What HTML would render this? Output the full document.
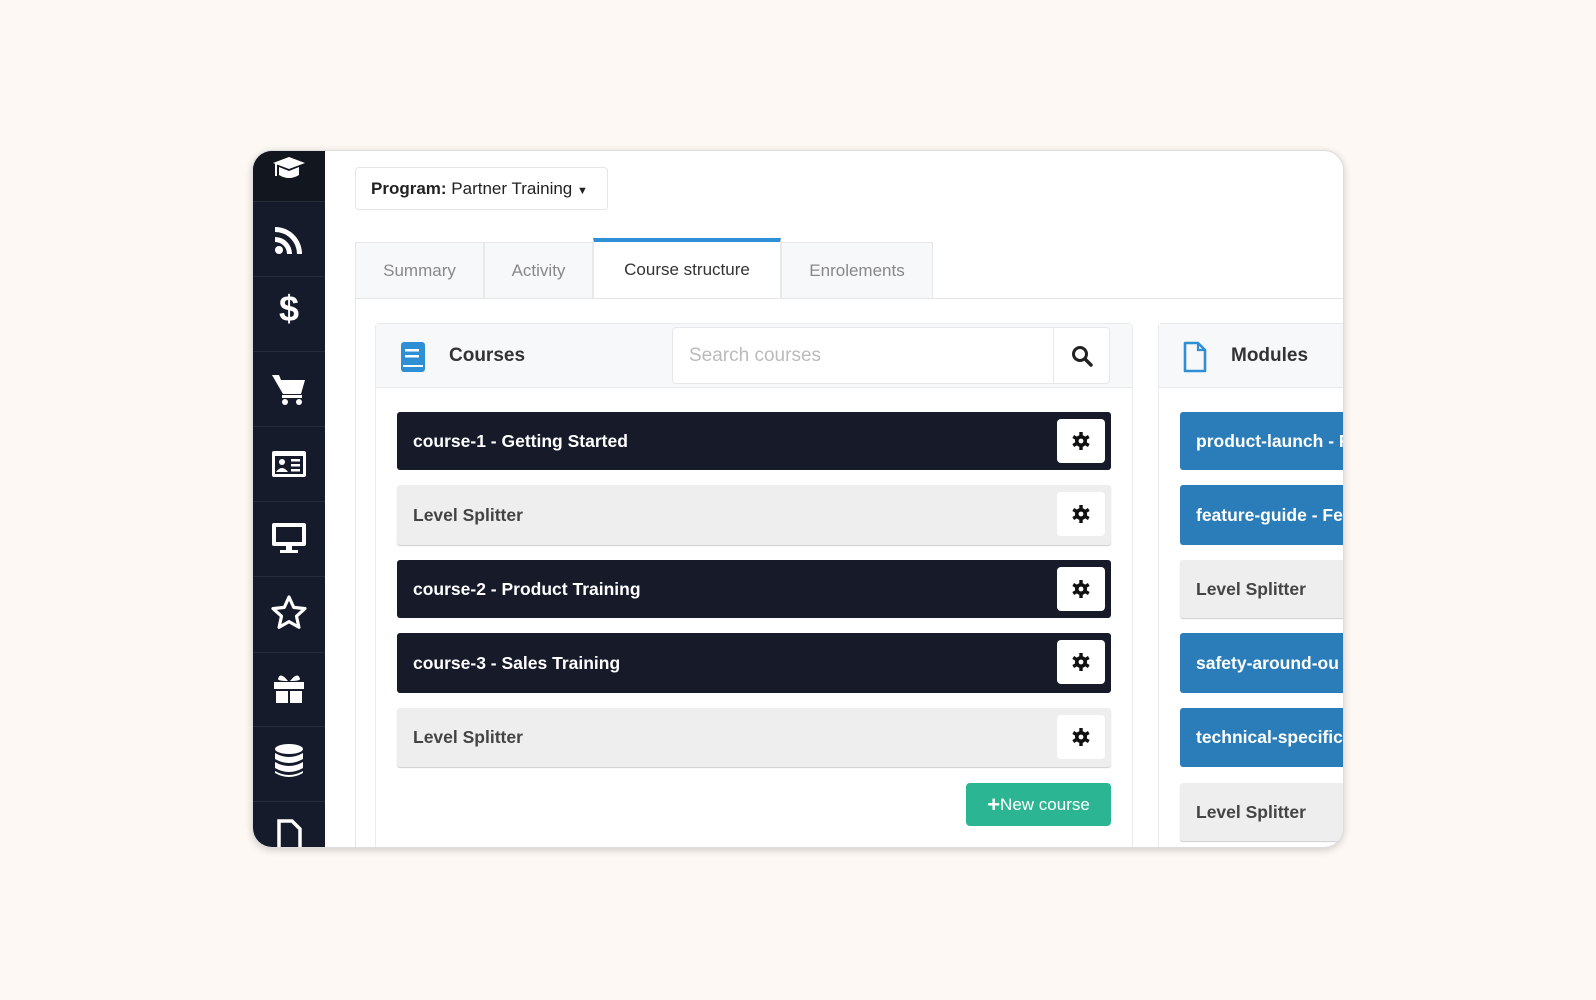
<!DOCTYPE html>
<html><head><meta charset="utf-8"><style>
*{box-sizing:border-box;margin:0;padding:0}
body{width:1596px;height:1000px;background:#fdf8f3;font-family:"Liberation Sans",sans-serif;position:relative;overflow:hidden}
.card{position:absolute;left:252px;top:150px;width:1092px;height:698px;background:#fff;border-radius:20px;overflow:hidden;box-shadow:0 2px 8px rgba(0,0,0,.18);border:1px solid #ddd}
.a{position:absolute}
.side{left:0;top:0;width:72px;height:698px;background:#161b2b}
.side .logo{position:absolute;left:0;top:0;width:72px;height:50px;background:#12161f}
.sep{position:absolute;left:0;width:72px;height:1px;background:#262c3c}
.ic{position:absolute;left:16px;width:40px;height:40px}
.row{position:absolute;height:58px;border-radius:3px;font-size:17.5px;font-weight:bold;line-height:58px;padding-left:16px;white-space:nowrap;overflow:hidden}
.dk{background:#161a29;color:#fff}
.lt{background:#eeeeee;color:#444;box-shadow:0 1px 1px #ccc}
.bl{background:#2a7db8;color:#fff}
.gear{position:absolute;right:6px;top:7px;width:48px;height:44px;background:#fff;border-radius:4px}
.gear svg{position:absolute;left:15px;top:13px}
.tab{position:absolute;top:91px;height:56px;line-height:56px;text-align:center;font-size:17px;color:#888;background:#f7f8fa;border:1px solid #e6e8eb;border-bottom:none}
</style></head><body>
<div class="card">
 <div class="a side">
  <div class="logo"></div>
  <svg class="ic" style="top:2px" viewBox="0 0 40 40"><path d="M4 10 L20 4 L36 10 L20 16 Z" fill="#fff"/><path d="M10 14 V22 Q20 28 30 22 V14 L20 18 Z" fill="#fff"/><rect x="6" y="11" width="2" height="12" fill="#fff"/></svg>
  <div class="sep" style="top:50px"></div>
  <svg class="ic" style="top:69px" viewBox="0 0 40 40"><circle cx="10" cy="30" r="4" fill="#fff"/><path d="M6 17a17 17 0 0 1 17 17h-5a12 12 0 0 0-12-12z M6 7a27 27 0 0 1 27 27h-5a22 22 0 0 0-22-22z" fill="#fff"/></svg>
  <div class="sep" style="top:125px"></div>
  <div class="a" style="left:0;top:137px;width:72px;text-align:center;color:#fff;font-size:36px;font-weight:bold">$</div>
  <div class="sep" style="top:200px"></div>
  <svg class="ic" style="top:218px" viewBox="0 0 40 40"><path d="M3 6h7l2 5h24l-4 14H14z" fill="#fff"/><rect x="13" y="26" width="20" height="3" fill="#fff"/><circle cx="16" cy="33" r="3" fill="#fff"/><circle cx="30" cy="33" r="3" fill="#fff"/></svg>
  <div class="sep" style="top:275px"></div>
  <svg class="ic" style="top:293px" viewBox="0 0 40 40"><rect x="3" y="7" width="34" height="26" rx="2" fill="#fff"/><rect x="6" y="12" width="28" height="18" fill="#161b2b"/><circle cx="13" cy="18" r="3" fill="#fff"/><path d="M7 28q6-8 12 0z" fill="#fff"/><rect x="22" y="15" width="9" height="2.5" fill="#fff"/><rect x="22" y="20" width="9" height="2.5" fill="#fff"/><rect x="22" y="25" width="9" height="2.5" fill="#fff"/></svg>
  <div class="sep" style="top:350px"></div>
  <svg class="ic" style="top:366px" viewBox="0 0 40 40"><rect x="3" y="6" width="34" height="23" rx="2" fill="#fff"/><rect x="7" y="10" width="26" height="15" fill="#161b2b"/><rect x="17" y="29" width="6" height="4" fill="#fff"/><rect x="11" y="33" width="18" height="3" fill="#fff"/></svg>
  <div class="sep" style="top:425px"></div>
  <svg class="ic" style="top:442px" viewBox="0 0 40 40"><path d="M20 4l4.7 10.4 11.3 1.2-8.5 7.6 2.4 11.1L20 28.6 10.1 34.3l2.4-11.1L4 15.6l11.3-1.2z" fill="none" stroke="#fff" stroke-width="3.2" stroke-linejoin="round"/></svg>
  <div class="sep" style="top:501px"></div>
  <svg class="ic" style="top:517px" viewBox="0 0 40 40"><rect x="5" y="14" width="30" height="7" fill="#fff"/><rect x="7" y="23" width="12" height="12" fill="#fff"/><rect x="21" y="23" width="12" height="12" fill="#fff"/><path d="M19 13q-8-10-10-2 0 2 10 2zM21 13q8-10 10-2 0 2-10 2z" fill="#fff"/></svg>
  <div class="sep" style="top:575px"></div>
  <svg class="ic" style="top:590px" viewBox="0 0 40 40"><ellipse cx="20" cy="8" rx="14" ry="5" fill="#fff"/><path d="M6 12q14 8 28 0v6q-14 8-28 0zM6 21q14 8 28 0v6q-14 8-28 0zM6 30q14 8 28 0v2q-14 8-28 0z" fill="#fff"/></svg>
  <div class="sep" style="top:650px"></div>
  <svg class="ic" style="top:666px" viewBox="0 0 40 40"><path d="M10 4h13l8 8v26H10z" fill="none" stroke="#fff" stroke-width="3.5"/></svg>
 </div>

 <div class="a" style="left:102px;top:16px;width:253px;height:43px;border:1px solid #e6e6e6;border-radius:4px;font-size:17px;line-height:41px;padding-left:15px;color:#222"><b>Program:</b> Partner Training <span style="font-size:11px">&#9660;</span></div>

 <div class="tab" style="left:102px;width:129px">Summary</div>
 <div class="tab" style="left:231px;width:109px">Activity</div>
 <div class="tab" style="left:340px;width:188px;background:#fff;color:#333;border-top:4px solid #2e8fd4;top:87px;height:61px;line-height:55px">Course structure</div>
 <div class="tab" style="left:528px;width:152px">Enrolements</div>
 <div class="a" style="left:102px;top:147px;width:990px;height:1px;background:#e3e5e8"></div>
 <div class="a" style="left:102px;top:147px;width:1px;height:560px;background:#e3e5e8"></div>

 <!-- courses panel -->
 <div class="a" style="left:122px;top:172px;width:758px;height:540px;border:1px solid #e9ebee;border-radius:4px"></div>
 <div class="a" style="left:123px;top:173px;width:756px;height:64px;background:#f7f8fa;border-bottom:1px solid #e6e8eb"></div>
 <svg class="a" style="left:147px;top:190px" width="26" height="32" viewBox="0 0 26 32"><rect x="1" y="1" width="24" height="30" rx="3" fill="#2e8fd4"/><rect x="5" y="8" width="14" height="2.5" fill="#fff"/><rect x="5" y="14" width="14" height="2.5" fill="#fff"/><rect x="3" y="24" width="20" height="2" fill="#fff"/></svg>
 <div class="a" style="left:196px;top:190px;font-size:19px;font-weight:bold;color:#333;line-height:30px">Courses</div>
 <div class="a" style="left:419px;top:176px;width:438px;height:57px;background:#fff;border:1px solid #e6e8eb;border-radius:4px"></div>
 <div class="a" style="left:436px;top:176px;line-height:57px;font-size:19px;color:#bbb">Search courses</div>
 <div class="a" style="left:800px;top:176px;width:1px;height:57px;background:#e6e8eb"></div>
 <svg class="a" style="left:818px;top:194px" width="22" height="22" viewBox="0 0 22 22"><circle cx="9" cy="9" r="6.5" fill="none" stroke="#222" stroke-width="3"/><path d="M14 14l6 6" stroke="#222" stroke-width="3.5" stroke-linecap="round"/></svg>

 <div class="row dk" style="left:144px;top:261px;width:714px">course-1 - Getting Started<div class="gear"><svg width="18" height="18" viewBox="0 0 18 18"><g fill="#111"><circle cx="9" cy="9" r="6"/><rect x="7.3" y="0" width="3.4" height="18"/><rect x="7.3" y="0" width="3.4" height="18" transform="rotate(60 9 9)"/><rect x="7.3" y="0" width="3.4" height="18" transform="rotate(120 9 9)"/></g><circle cx="9" cy="9" r="2.4" fill="#fff"/></svg></div></div>
 <div class="row lt" style="left:144px;top:334px;width:714px;height:60px;line-height:60px">Level Splitter<div class="gear"><svg width="18" height="18" viewBox="0 0 18 18"><g fill="#111"><circle cx="9" cy="9" r="6"/><rect x="7.3" y="0" width="3.4" height="18"/><rect x="7.3" y="0" width="3.4" height="18" transform="rotate(60 9 9)"/><rect x="7.3" y="0" width="3.4" height="18" transform="rotate(120 9 9)"/></g><circle cx="9" cy="9" r="2.4" fill="#fff"/></svg></div></div>
 <div class="row dk" style="left:144px;top:409px;width:714px">course-2 - Product Training<div class="gear"><svg width="18" height="18" viewBox="0 0 18 18"><g fill="#111"><circle cx="9" cy="9" r="6"/><rect x="7.3" y="0" width="3.4" height="18"/><rect x="7.3" y="0" width="3.4" height="18" transform="rotate(60 9 9)"/><rect x="7.3" y="0" width="3.4" height="18" transform="rotate(120 9 9)"/></g><circle cx="9" cy="9" r="2.4" fill="#fff"/></svg></div></div>
 <div class="row dk" style="left:144px;top:482px;width:714px;height:60px;line-height:60px">course-3 - Sales Training<div class="gear"><svg width="18" height="18" viewBox="0 0 18 18"><g fill="#111"><circle cx="9" cy="9" r="6"/><rect x="7.3" y="0" width="3.4" height="18"/><rect x="7.3" y="0" width="3.4" height="18" transform="rotate(60 9 9)"/><rect x="7.3" y="0" width="3.4" height="18" transform="rotate(120 9 9)"/></g><circle cx="9" cy="9" r="2.4" fill="#fff"/></svg></div></div>
 <div class="row lt" style="left:144px;top:557px;width:714px;height:59px;line-height:59px">Level Splitter<div class="gear"><svg width="18" height="18" viewBox="0 0 18 18"><g fill="#111"><circle cx="9" cy="9" r="6"/><rect x="7.3" y="0" width="3.4" height="18"/><rect x="7.3" y="0" width="3.4" height="18" transform="rotate(60 9 9)"/><rect x="7.3" y="0" width="3.4" height="18" transform="rotate(120 9 9)"/></g><circle cx="9" cy="9" r="2.4" fill="#fff"/></svg></div></div>
 <div class="a" style="left:713px;top:632px;width:145px;height:43px;background:#2bb592;border-radius:4px;color:#fff;font-size:17px;line-height:43px;text-align:center"><b style="font-size:22px;vertical-align:-2px">+</b>New course</div>

 <!-- modules panel -->
 <div class="a" style="left:905px;top:172px;width:200px;height:540px;border:1px solid #e9ebee;border-radius:4px"></div>
 <div class="a" style="left:906px;top:173px;width:200px;height:64px;background:#f7f8fa;border-bottom:1px solid #e6e8eb"></div>
 <svg class="a" style="left:930px;top:190px" width="24" height="32" viewBox="0 0 24 32"><path d="M2 2h13l7 7v21H2z" fill="none" stroke="#2e8fd4" stroke-width="2.6" stroke-linejoin="round"/><path d="M15 2v7h7" fill="none" stroke="#2e8fd4" stroke-width="2.2"/></svg>
 <div class="a" style="left:978px;top:190px;font-size:19px;font-weight:bold;color:#333;line-height:30px">Modules</div>
 <div class="row bl" style="left:927px;top:261px;width:200px">product-launch - P</div>
 <div class="row bl" style="left:927px;top:334px;width:200px;height:60px;line-height:60px">feature-guide - Fe</div>
 <div class="row lt" style="left:927px;top:409px;width:200px">Level Splitter</div>
 <div class="row bl" style="left:927px;top:482px;width:200px;height:60px;line-height:60px">safety-around-ou</div>
 <div class="row bl" style="left:927px;top:557px;width:200px;height:59px;line-height:59px">technical-specific</div>
 <div class="row lt" style="left:927px;top:632px;width:200px">Level Splitter</div>
</div>
</body></html>
